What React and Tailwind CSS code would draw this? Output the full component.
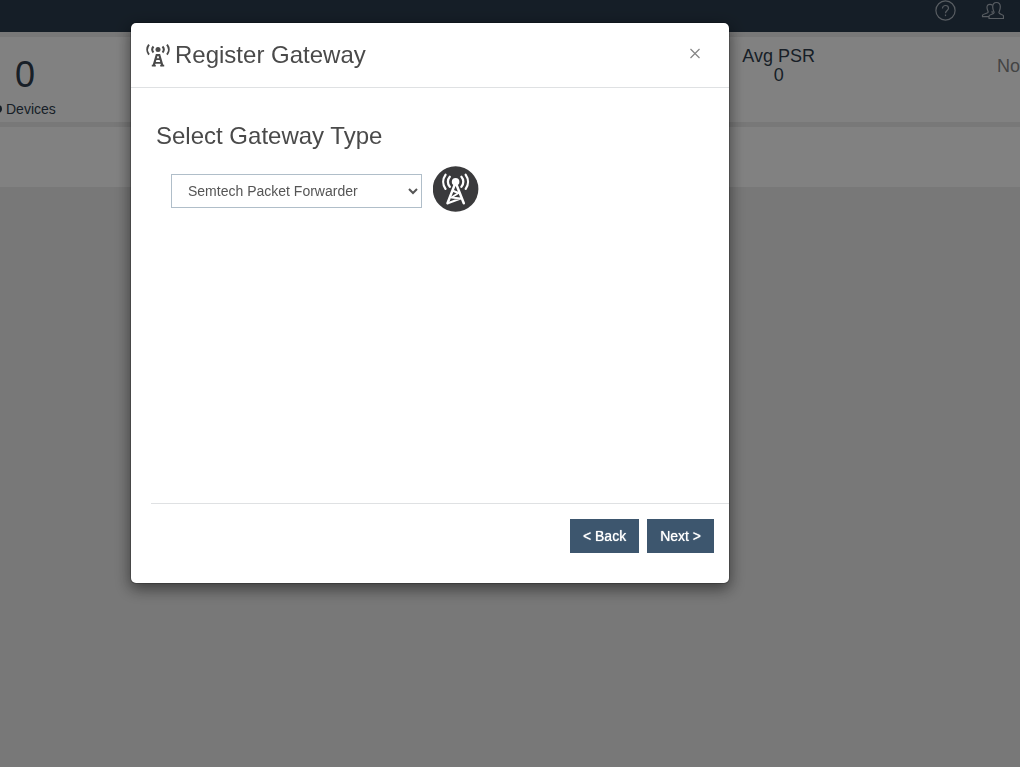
import { useState } from 'react';

export default function App() {
  const [open, setOpen] = useState(true);

  return (
    <div className="min-h-screen overflow-hidden bg-[#dadada] font-['Liberation_Sans',Arial,sans-serif] text-[#2c3a48]">
      <TopBar />
      <StatsRow />
      <div className="mt-[5px] h-[60px] bg-[#ececec]"></div>

      {open && (
        <div className="fixed inset-0 overflow-y-auto bg-black/45">
          <GatewayDialog onClose={() => setOpen(false)} />
        </div>
      )}
    </div>
  );
}

function TopBar() {
  return (
    <header className="flex h-8 items-start justify-end gap-6 bg-[#273747] pr-4 text-[#a0a9b2]">
      <button type="button" aria-label="Help">
        <svg className="h-[22px] w-[22px]" viewBox="0 0 22 22" fill="none" stroke="currentColor" strokeWidth="1.2">
          <circle cx="10.5" cy="10.5" r="9.6" />
          <path d="M7.5 8.5v-.2a3 2.8 0 0 1 6 0c0 2.2-3 2.300-3 5" />
          <path d="M10.5 14.500v1.600" />
        </svg>
      </button>
      <button type="button" aria-label="Users">
        <svg className="h-[22px] w-[23px]" viewBox="0 0 23 22" fill="none" stroke="currentColor" strokeWidth="1.2" strokeLinejoin="round">
          <path d="M8 18.500h14.500v-2.500c0-1.300-4.300-1.700-4.600-3.300-.1-1 1.400-2.500 1.400-6 0-2.900-1.300-4.200-3.800-4.200s-3.800 1.300-3.800 4.200c0 3.500 1.500 5 1.400 6-.3 1.600-5.100 2-5.100 3.300z" />
          <path d="M11.500 5.200c-.7-.600-1.500-.900-2.500-.900-2.100 0-3 1.300-3 3.300 0 2.400 1.300 3.600 1.200 4.600C7 13.500 1.500 14 1.500 15.200v1.500h6.500" />
          <path d="M11.200 11c-.3.700-.1 1.300.2 1.900" />
        </svg>
      </button>
    </header>
  );
}

function StatsRow() {
  return (
    <section className="mt-[5px] flex h-[85px] justify-between bg-[#ececec] whitespace-nowrap">
      <div className="-ml-1.5 pt-[18px] text-center">
        <p className="text-4xl leading-10">0</p>
        <p className="mt-1 flex items-center gap-1 text-sm">
          <span className="h-2 w-2 rounded-full bg-[#273747]"></span>
          Devices
        </p>
      </div>
      <div className="flex gap-[182px]">
        <div className="pt-[10px] text-center text-lg leading-[19px]">
          <p>Avg PSR</p>
          <p>0</p>
        </div>
        <p className="pt-5 text-lg leading-[19px] text-[#7c7c7c]">No</p>
      </div>
    </section>
  );
}

function GatewayDialog({ onClose }) {
  const [type, setType] = useState('semtech');

  return (
    <div
      role="dialog"
      aria-labelledby="dialog-title"
      className="mt-[22px] mr-4 mb-8 ml-[130px] max-w-[600px] rounded-md border border-black/20 bg-white bg-clip-padding text-[#4a4a4a] shadow-[0_5px_15px_rgba(0,0,0,0.5)]"
    >
      <div className="flex h-[65px] items-center justify-between border-b border-[#dfe1e3] pr-6 pl-[15px]">
        <h1 id="dialog-title" className="flex items-center gap-[5px] text-2xl">
          <TowerIcon />
          Register Gateway
        </h1>
        <button type="button" onClick={onClose} aria-label="Close" className="p-1 pb-2">
          <svg className="h-3 w-3" viewBox="0 0 12 12" fill="none" stroke="#858585" strokeWidth="1.2">
            <path d="M1.500 2l9 9M10.500 2l-9 9" />
          </svg>
        </button>
      </div>

      <div className="min-h-[415px] px-[25px] pt-8">
        <h2 className="text-2xl">
          <label htmlFor="gateway-type">Select Gateway Type</label>
        </h2>
        <div className="mt-3.5 flex items-start gap-[11px] pl-[15px]">
          <select
            id="gateway-type"
            value={type}
            onChange={(e) => setType(e.target.value)}
            className="mt-2 h-[34px] w-[251px] border border-[#b0bec9] bg-white px-3 text-sm text-[#555555]"
          >
            <option value="semtech">Semtech Packet Forwarder</option>
          </select>
          <TowerBadge />
        </div>
      </div>

      <div className="ml-5 flex justify-end gap-2 border-t border-[#dfe1e3] pt-[15px] pr-[15px] pb-[30px]">
        <FooterButton>&lt; Back</FooterButton>
        <FooterButton>Next &gt;</FooterButton>
      </div>
    </div>
  );
}

function FooterButton({ children }) {
  return (
    <button
      type="button"
      className="h-[34px] bg-[#3d566e] px-[13px] text-sm text-white [text-shadow:0_0_1px_white] hover:bg-[#34495e]"
    >
      {children}
    </button>
  );
}

function TowerIcon() {
  return (
    <svg className="h-6 w-6" viewBox="0 0 24 24" fill="none" stroke="#4a4a4a" strokeWidth="1.800" aria-hidden="true">
      <circle cx="12" cy="6.500" r="2.500" fill="#4a4a4a" stroke="none" />
      <path d="M7.500 3.500a4.500 4.500 0 0 0 0 6M16.500 3.500a4.500 4.500 0 0 1 0 6" strokeWidth="2" />
      <path d="M3 1.500a8 8 0 0 0 0 10M21 1.500a8 8 0 0 1 0 10" strokeWidth="2" />
      <path d="M7.500 23l3.200-11h2.600l3.200 11" strokeWidth="2.200" />
      <path d="M9 16.200h6M8.200 19.800h7.600M5.800 22.700h4M14.200 22.700h4" strokeWidth="1.700" />
    </svg>
  );
}

function TowerBadge() {
  return (
    <svg className="h-[46px] w-[46px]" viewBox="0 0 46 46" fill="none" stroke="#ffffff" strokeWidth="2.300" strokeLinecap="round" strokeLinejoin="round" aria-hidden="true">
      <circle cx="22.600" cy="23" r="22.800" fill="#3a3a3c" stroke="none" />
      <circle cx="22.600" cy="15.800" r="3.800" fill="#ffffff" stroke="none" />
      <path d="M16.800 10.800a7.500 7.500 0 0 0 0 10M28.400 10.800a7.500 7.500 0 0 1 0 10" />
      <path d="M12.500 8.800a12 12 0 0 0 0 14M32.700 8.800a12 12 0 0 1 0 14" />
      <path d="M21.800 18.500L14.500 37.300M23.400 18.500L30.800 37.300" strokeWidth="2.500" />
      <path d="M20.500 25l5 2-7 4.500 9.200 1-12.200 4.500" strokeWidth="1.900" />
    </svg>
  );
}
